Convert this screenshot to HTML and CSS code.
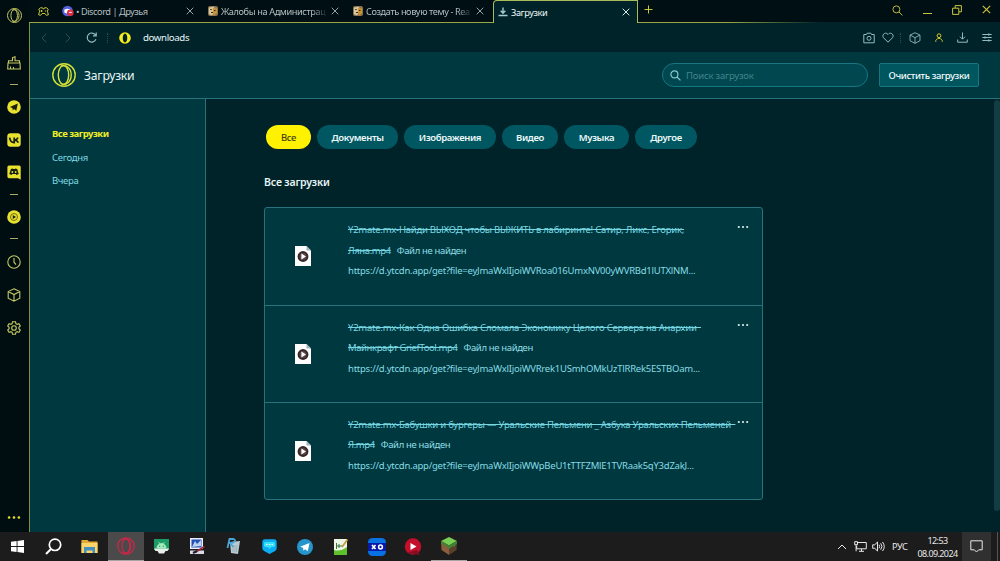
FILE: index.html
```html
<!DOCTYPE html>
<html lang="ru">
  <head>
    <meta charset="UTF-8" />
    <title>Загрузки</title>
    <link rel="stylesheet" href="styles.css">
  </head>
  <body>
    <!-- Shared icons -->
    <svg class="sprite">
      <symbol id="close" viewBox="0 0 8 8"><path d="M.7.7l6.6 6.6M7.3.7L.7 7.3" /></symbol>
      <symbol id="cube" viewBox="0 0 14 14"><path d="M7 .8l5.8 2.8v6.6L7 13.2l-5.8-3V3.6zM1.2 3.6L7 6.6l5.8-3M7 6.6v6.6" /></symbol>
      <symbol id="search" viewBox="0 0 12 12"><circle cx="4.8" cy="4.8" r="3.8" /><path d="M7.6 7.6l3.8 3.8" /></symbol>
      <symbol id="dots" viewBox="0 0 12 4"><circle cx="1.8" cy="2" r="1.1" /><circle cx="6" cy="2" r="1.1" /><circle cx="10.2" cy="2" r="1.1" /></symbol>
      <symbol id="opera" viewBox="0 0 24 24"><circle cx="12" cy="12" r="11.2" /><ellipse cx="11.500" cy="12" rx="5.200" ry="9.400" /><path d="M8.500 3.500c5-3 10.700 1.500 10.700 8.500s-5.700 11.500-10.700 8.500" /></symbol>
      <symbol id="forum" viewBox="0 0 10 10"><rect width="10" height="10" rx="2" fill="#8d7350" /><path d="M1 1.500l5-.8 1 5-3 3.500-3-1z" fill="#d8c8a0" /><path d="M5 2l4 .5v4.500L6 9.500 4.600 7z" fill="#c99432" /><path d="M2.200 3.500h1.500M6 4.500h1.500M3 6.500h2" stroke="#302b28" /></symbol>
      <symbol id="video" viewBox="0 0 16 20"><path d="M0 0h11.500L16 4.500V20H0z" fill="#fff" /><path d="M11.500 0v4.500H16z" fill="#9fb7bb" /><circle cx="8" cy="10.500" r="5.400" fill="#38272a" /><circle cx="8" cy="10.500" r="3.500" fill="#574643" /><path d="M6.400 7.500l4.600 3-4.600 3z" fill="#fff" /></symbol>
    </svg>

    <div class="browser">
      <!-- Left GX sidebar -->
      <div class="rail">
        <div class="rail-item rail-logo"><svg width="15" height="15"><use href="#opera" /></svg></div>
        <div class="rail-item"><svg width="14" height="14" viewBox="0 0 14 14"><path d="M1 7h12l.3 6H.7zM1.500 7V4.800h4V1.600L8 .8v4h4.500V7M3.500 13v-2.500M6.500 13v-2" /></svg></div>
        <div class="rail-line first"></div>
        <div class="rail-item"><svg class="solid" width="14" height="14" viewBox="0 0 14 14"><circle cx="7" cy="7" r="6.800" /><path class="cut" d="M2.800 6.900l8-3.300-1.500 7.200-2.300-1.700-1.200 1.300-.4-2.500z" /></svg></div>
        <div class="rail-item"><svg class="solid" width="14" height="14" viewBox="0 0 14 14"><rect x=".3" y=".3" width="13.400" height="13.400" rx="3" /><path class="cut-line" d="M2.600 4.600c.5 3.200 2 5 4.600 5V4.600M11 4.600c-.7 1.500-1.800 2.400-3.600 2.600 2 .1 3.200 1 4 2.400" /></svg></div>
        <div class="rail-item"><svg class="solid" width="14" height="15" viewBox="0 0 14 15"><path d="M2 .5h10.200q1.500 0 1.500 1.500v12.700l-2.700-1.500H2Q.4 13.200.4 11.600V2Q.4.5 2 .5z" /><path class="cut" d="M3.900 3.900l2-.5.4.7h1.500l.4-.7 2 .5 1.500 5-2.200 1.200-.8-1.200H5.300l-.8 1.200L2.300 9z" /><circle cx="5.300" cy="7" r=".9" /><circle cx="8.700" cy="7" r=".9" /></svg></div>
        <div class="rail-line"></div>
        <div class="rail-item music"><svg class="solid" width="14" height="14" viewBox="0 0 14 14"><circle cx="7" cy="7" r="6.800" /><circle cx="7" cy="7" r="3.500" fill="none" stroke="#655f0b" stroke-width=".9" /><path class="cut" d="M5.800 5l3.200 2-3.200 2z" /></svg></div>
        <div class="rail-line"></div>
        <div class="rail-item"><svg width="14" height="14" viewBox="0 0 14 14"><circle cx="7" cy="7" r="6.200" /><path d="M7 3v4.200l2 2.500" /></svg></div>
        <div class="rail-item"><svg width="14" height="14"><use href="#cube" /></svg></div>
        <div class="rail-item"><svg width="14" height="14" viewBox="0 0 14 14"><path d="M5.500.8h3l.4 1.900 1.200.6 1.800-.7 1.400 2.400-1.400 1.300v1.400l1.400 1.300-1.400 2.400-1.800-.7-1.200.6-.4 1.900h-3l-.4-1.900-1.200-.6-1.800.7L.7 9l1.400-1.300V6.300L.7 5l1.400-2.400 1.800.7 1.200-.6z" /><circle cx="7" cy="7" r="2.300" /></svg></div>
        <div class="rail-more"><svg class="solid" width="14" height="5"><use href="#dots" /></svg></div>
      </div>

      <div class="window">
        <!-- Tabs -->
        <div class="tabs">
          <div class="gx-corner"><svg width="11" height="9" viewBox="0 0 11 9"><path d="M2.500.8h2l.4 1h1.200l.4-1h2l1.700 1.400-.8 2 1 3.600-2 .5-1.500-1.800H4.100L2.600 8.300l-2-.5 1-3.600-.8-2zM3.500 3v2M2.600 4h2M6.800 4h1.400" /></svg></div>
          <div class="tab">
            <svg class="tab-icon discord" width="12" height="12" viewBox="0 0 13 12"><circle cx="6" cy="6" r="5.800" fill="#5660dc" /><path d="M2.700 4.500Q6 2.500 9 4.500l.5 3Q6 9.500 2.500 7.500z" fill="#fff" /><circle cx="9" cy="8" r="3.600" fill="#dc2f43" /><path d="M7.600 7.500h3" stroke="#fff" /></svg>
            <span class="tab-title discord-title">• Discord | Друзья</span>
            <svg class="tab-close" width="8" height="8"><use href="#close" /></svg>
          </div>
          <div class="tab">
            <svg class="tab-icon" width="10" height="10"><use href="#forum" /></svg>
            <span class="tab-title fade">Жалобы на Администрац</span>
            <svg class="tab-close" width="8" height="8"><use href="#close" /></svg>
          </div>
          <div class="tab">
            <svg class="tab-icon" width="10" height="10"><use href="#forum" /></svg>
            <span class="tab-title fade">Создать новую тему - Rea</span>
            <svg class="tab-close" width="8" height="8"><use href="#close" /></svg>
          </div>
          <div class="tab active">
            <svg class="tab-icon" width="10" height="10" viewBox="0 0 10 10"><path d="M5 .5v5.500M2.700 3.800L5 6.200l2.300-2.400M.5 8.500h9" stroke="#a5cbd0" stroke-width="1.400" fill="none" /></svg>
            <span class="tab-title">Загрузки</span>
            <svg class="tab-close" width="8" height="8"><use href="#close" /></svg>
          </div>
          <div class="tabs-rest">
            <svg width="9" height="9" viewBox="0 0 9 9"><path d="M4.500.5v8M.5 4.500h8" /></svg>
            <div class="window-buttons">
              <svg width="11" height="11"><use href="#search" /></svg>
              <svg width="9" height="10" viewBox="0 0 9 10"><path d="M0 8.500h9" /></svg>
              <svg width="10" height="10" viewBox="0 0 10 10"><path d="M.6 3.200h6.200v6.200H.6zM3.200 3V.6h6.200v6.200H7" /></svg>
              <svg width="9" height="9"><use href="#close" /></svg>
            </div>
          </div>
        </div>

        <!-- Address bar -->
        <div class="address">
          <svg class="dim" width="6" height="10" viewBox="0 0 6 10"><path d="M5.300.7L1 5l4.300 4.300" /></svg>
          <svg class="dim forward" width="6" height="10" viewBox="0 0 6 10"><path d="M.7.7L5 5 .7 9.300" /></svg>
          <svg class="reload" width="12" height="11" viewBox="0 0 12 11"><path d="M9.900 7.300A4.500 4.500 0 1 1 9.500 3M10.200.6v3.200H7" /></svg>
          <span class="sep"></span>
          <svg class="site" width="12" height="12" viewBox="0 0 12 12"><path fill-rule="evenodd" d="M6 .2a5.800 5.800 0 0 1 0 11.600A5.800 5.800 0 0 1 6 .2zM6 1.500c-3 0-3 9 0 9s3-9 0-9z" /></svg>
          <span class="url">downloads</span>
          <div class="address-tools">
            <svg width="12" height="12" viewBox="0 0 12 12"><path d="M.8 2.500h2.700l.6-1.300h3.800l.6 1.300h2.700v8.300H.8z" /><circle cx="6" cy="6.300" r="2" /></svg>
            <svg width="12" height="11" viewBox="0 0 12 11"><path d="M6 10.200L1.500 5.700C-.7 2.800 3.500-.8 6 2.500c2.500-3.300 6.700.3 4.500 3.200z" /></svg>
            <span class="sep"></span>
            <svg class="box" width="12" height="12"><use href="#cube" /></svg>
            <svg class="profile" width="8" height="9" viewBox="0 0 8 9"><circle cx="4" cy="2.700" r="1.900" /><path d="M.8 8.800V7.400l2-2M7.200 8.800V7.400l-2-2M2.800 5.400h2.400" /></svg>
            <svg width="11" height="11" viewBox="0 0 11 11"><path d="M5.500.5V7M3 4.700l2.500 2.500L8 4.700M.7 7.500v2.700h9.600V7.500" /></svg>
            <svg width="10" height="9" viewBox="0 0 10 9"><path d="M.3 1.500h9.400M.3 4.500h9.400M.3 7.500h9.400M6.800.3v2.400M3 3.300v2.400M6.800 6.300v2.400" /></svg>
          </div>
        </div>

        <!-- Page header -->
        <div class="header">
          <svg class="logo" width="24" height="24"><use href="#opera" /></svg>
          <h1>Загрузки</h1>
          <div class="search">
            <svg width="11" height="11"><use href="#search" /></svg>
            <span>Поиск загрузок</span>
          </div>
          <button class="clear">Очистить загрузки</button>
        </div>

        <div class="page">
          <div class="menu">
            <a class="current">Все загрузки</a>
            <a>Сегодня</a>
            <a>Вчера</a>
          </div>

          <div class="content">
            <div class="chips">
              <div class="chip selected">Все</div>
              <div class="chip docs">Документы</div>
              <div class="chip images">Изображения</div>
              <div class="chip videos">Видео</div>
              <div class="chip songs">Музыка</div>
              <div class="chip other">Другое</div>
            </div>
            <h2>Все загрузки</h2>
            <div class="list">
              <div class="download">
                <svg class="file" width="16" height="20"><use href="#video" /></svg>
                <div class="info">
                  <div><s>Y2mate.mx-Найди ВЫХОД чтобы ВЫЖИТЬ в лабиринте! Сатир, Ликс, Егорик,</s></div>
                  <div><s class="tail">Ляна.mp4</s><span class="missing">Файл не найден</span></div>
                  <div class="link">https://d.ytcdn.app/get?file=eyJmaWxlIjoiWVRoa016UmxNV00yWVRBd1lUTXlNM...</div>
                </div>
                <svg class="more" width="12" height="4"><use href="#dots" /></svg>
              </div>
              <div class="download">
                <svg class="file" width="16" height="20"><use href="#video" /></svg>
                <div class="info">
                  <div><s>Y2mate.mx-Как Одна Ошибка Сломала Экономику Целого Сервера на Анархии&nbsp;&nbsp;</s></div>
                  <div><s class="tail">Майнкрафт GriefTool.mp4</s><span class="missing">Файл не найден</span></div>
                  <div class="link">https://d.ytcdn.app/get?file=eyJmaWxlIjoiWVRrek1USmhOMkUzTlRRek5ESTBOam...</div>
                </div>
                <svg class="more" width="12" height="4"><use href="#dots" /></svg>
              </div>
              <div class="download">
                <svg class="file" width="16" height="20"><use href="#video" /></svg>
                <div class="info">
                  <div><s>Y2mate.mx-Бабушки и бургеры — Уральские Пельмени _ Азбука Уральских Пельменей&nbsp;&nbsp;</s></div>
                  <div><s class="tail">Я.mp4</s><span class="missing">Файл не найден</span></div>
                  <div class="link">https://d.ytcdn.app/get?file=eyJmaWxlIjoiWWpBeU1tTTFZMlE1TVRaak5qY3dZakJ...</div>
                </div>
                <svg class="more" width="12" height="4"><use href="#dots" /></svg>
              </div>
            </div>
          </div>
          <div class="scrollbar"></div>
        </div>
      </div>
    </div>

    <!-- Windows taskbar -->
    <div class="taskbar">
      <div class="task"><svg width="13" height="13" viewBox="0 0 13 13"><path d="M0 1.800L5.600 1v5H0zM6.500.9L13 0v6H6.500zM0 7h5.600v5L0 11.200zM6.500 7H13v6l-6.500-.9z" fill="#fff" /></svg></div>
      <div class="task"><svg width="17" height="17" viewBox="0 0 17 17"><circle cx="10" cy="6.800" r="5.700" fill="none" stroke="#fff" stroke-width="1.700" /><path d="M6 11L1 16" stroke="#fff" stroke-width="2" /></svg></div>
      <div class="task"><svg width="17" height="15" viewBox="0 0 17 15"><path d="M.5 1h6l1.500 1.500h8.500V14H.5z" fill="#e5a936" /><path d="M.5 4h16v10H.5z" fill="#fbd56b" /><path d="M3 8h11v6h-2.500v-2.500h-6V14H3z" fill="#438fc0" /></svg></div>
      <div class="task open"><svg width="18" height="18" viewBox="0 0 18 18"><g fill="none" stroke="#cf2648" stroke-width="1.200"><circle cx="9" cy="9" r="8.200" /><ellipse cx="9" cy="9" rx="4" ry="7" /><path d="M6.500 2.500c3.500-2 7.300 1.500 7.300 6.500s-3.800 8.500-7.300 6.500" /></g></svg></div>
      <div class="task"><svg width="15" height="15" viewBox="0 0 15 15"><path d="M0 0h15v11H0z" fill="#1b9b67" /><path d="M3 9a4.500 4.500 0 0 1 9 0zM4.500 3l1.500 2M10.500 3L9 5" fill="#a7edbd" stroke="#a7edbd" stroke-width=".8" /><path d="M0 9.500h15L13.500 12h-2L10 14.500H5L3.500 12h-2z" fill="#e8eee9" /><circle cx="5.700" cy="7.200" r=".6" fill="#15754f" /><circle cx="9.300" cy="7.200" r=".6" fill="#15754f" /></svg></div>
      <div class="task"><svg width="15" height="17" viewBox="0 0 15 17"><path d="M0 0h13v11H0z" fill="#ececf4" /><path d="M1.500 1.500h10v8h-10z" fill="#2450b8" /><path d="M2 9l3-6 2 3 4-4v6z" fill="#b8d2f2" /><path d="M0 12.500h14V16H0z" fill="#dadbe8" /><path d="M5 14.500l9.500-6" stroke="#a52431" stroke-width="1.500" /><path d="M3 15l4-2" stroke="#21202c" stroke-width="2" /></svg></div>
      <div class="task"><svg width="15" height="17" viewBox="0 0 15 17"><path d="M4 4l10-1-2 13-7-1z" fill="#b9cbd2" /><path d="M7 7v7M9 7v7M11 7l-.5 7" stroke="#8fa5ae" stroke-width=".7" /><path d="M1.500 10L3.500 1h4c3 1 1.500 4-3.500 4l3.500 4" fill="none" stroke="#4aa5d6" stroke-width="1.800" /></svg></div>
      <div class="task"><svg width="15" height="15" viewBox="0 0 15 15"><path d="M3 .3h9q2.700 0 2.700 3v6q0 2-2 3L7.500 15l-5-2.700Q.3 11.300.3 9.300v-6Q.3.300 3 .3z" fill="#0bacf4" /><path d="M3.500 3h8q1.500 0 1.500 1.500v2Q13 8 11 8H9L7.500 10 6 8H4Q2 8 2 6.500v-2Q2 3 3.500 3z" fill="#37e2f7" /><path d="M4 5.500h1.500M6.800 5.500h1.500M9.600 5.500h1.500" stroke="#eaffff" stroke-width="1.200" /></svg></div>
      <div class="task"><svg width="16" height="16" viewBox="0 0 16 16"><circle cx="8" cy="8" r="8" fill="#2595cc" /><path d="M3 7.800l9.500-3.900-1.700 8.300L8 10.200l-1.500 1.500-.5-2.900z" fill="#fff" /></svg></div>
      <div class="task"><svg width="16" height="18" viewBox="0 0 16 18"><path d="M1 1h13v16H1z" fill="#edf5e5" /><path d="M1 12q6 2 13-3v8H1z" fill="#5ec12b" /><path d="M3.500 5v6M3.500 8h6M6 6v4" stroke="#3c7041" /><path d="M9 9l5.500-7.500" stroke="#c39a45" stroke-width="1.800" /></svg></div>
      <div class="task"><svg width="18" height="18" viewBox="0 0 18 18"><rect width="18" height="18" rx="4.500" fill="#0872e2" /><path d="M0 5h18v8H0z" fill="#0619a8" /><path d="M4 7l3.500 4M7.500 7L4 11" stroke="#fff" stroke-width="1.700" /><circle cx="12.500" cy="9" r="1.900" fill="none" stroke="#fff" stroke-width="1.500" /></svg></div>
      <div class="task"><svg width="18" height="18" viewBox="0 0 18 18"><circle cx="9" cy="8.500" r="8.200" fill="#c4102c" /><path d="M3 15l10-3 3 5-5-1z" fill="#850d20" /><path d="M6.500 5l6 3.500-6 3.500z" fill="#fff" /></svg></div>
      <div class="task running"><svg width="16" height="18" viewBox="0 0 16 18"><path d="M8 0l8 4-8 4.500L0 4z" fill="#79ce56" /><path d="M0 4l8 4.500V18l-7.500-5z" fill="#8b5d3d" /><path d="M16 4L8 8.500V18l7.500-5z" fill="#59402b" /><path d="M0 4l8 4.500L16 4v3l-2 1v2l-2-1-4 3-2-3-2 1V8L0 7z" fill="#3f8436" /></svg></div>
      <div class="tray">
        <svg width="10" height="6" viewBox="0 0 10 6"><path d="M1 5l4-4 4 4" /></svg>
        <svg class="network" width="13" height="11" viewBox="0 0 13 11"><path d="M3.500 1.500h8.800v6.300H2.700V5M5 10.300h5M7.500 8v2.300M.7.700h2.800v3H.7zM2.100 3.700v6.600" /></svg>
        <svg class="volume" width="13" height="11" viewBox="0 0 13 11"><path d="M.7 3.800h2L5.500 1v9L2.700 7.300h-2zM7 3.700q1.300 1.800 0 3.600M8.700 2.300q2.500 3.200 0 6.400M10.500 1q3.500 4.500 0 9" /></svg>
        <span class="lang">РУС</span>
        <div class="clock"><div>12:53</div><div>08.09.2024</div></div>
        <div class="notify"><svg width="13" height="13" viewBox="0 0 13 13"><path d="M.8.8h11.400v9H8.700L6.500 12 4.300 9.800H.8z" /></svg></div>
        <span class="peek"></span>
      </div>
    </div>
  </body>
</html>
```

FILE: styles.css
```css
* {
  box-sizing: border-box;
}

body {
  margin: 0;
  width: 1000px;
  height: 561px;
  overflow: hidden;
  background: #00232a;
  color: #e6f5f5;
  font-family: "Noto Sans", "Open Sans", sans-serif;
  font-size: 9.5px;
  white-space: nowrap;
}

svg {
  display: block;
  flex: none;
}

.sprite {
  display: none;
}

.browser {
  display: flex;
  height: 532px;
}

/* Left rail */
.rail {
  display: flex;
  flex-direction: column;
  width: 29px;
  padding-right: 1px;
  background: #000d11;
}

.rail-item {
  display: flex;
  align-items: center;
  justify-content: center;
  height: 33px;
}

.rail-logo {
  height: 30px;
  margin-bottom: 16px;
}

.rail-item.music {
  height: 32px;
}

.rail svg {
  fill: none;
  stroke: #c5c962;
  stroke-width: 1.1;
}

.rail .rail-logo svg {
  stroke-width: 1.6;
}

.rail svg.solid {
  fill: #e8e12f;
  stroke: none;
}

.rail .cut {
  fill: #17200c;
}

.rail .cut-line {
  fill: none;
  stroke: #17200c;
  stroke-width: 1.7;
}

.rail-line {
  height: 12px;
  padding: 5px 10px;
}

.rail-line.first {
  height: 11px;
}

.rail-line::before {
  content: "";
  display: block;
  height: 1px;
  background: #a6ab68;
}

.rail-more {
  display: flex;
  justify-content: center;
  margin-top: auto;
  padding-bottom: 12px;
}

.window {
  flex: 1;
  display: flex;
  flex-direction: column;
  min-width: 0;
}

/* Tabs */
.tabs {
  display: flex;
  height: 23px;
  background: #000f13;
}

.gx-corner {
  width: 29px;
  padding: 7px 0 0 9px;
  border-bottom: 1px solid #9aa947;
}

.gx-corner svg,
.tabs-rest svg {
  fill: none;
  stroke: #cbc640;
}

.tab {
  display: flex;
  align-items: center;
  width: 145px;
  padding: 0 9px 0 5px;
  border-bottom: 1px solid #9aa947;
  color: #b4bfc0;
  font-size: 9.2px;
}

.tab-icon {
  margin-right: 3px;
}

.tab-icon.discord {
  margin: 0 2px 0 -1px;
}

.tab-title {
  flex: 1;
  overflow: hidden;
  letter-spacing: -0.4px;
}

.tab-title.discord-title {
  letter-spacing: -0.45px;
}

.tab-title.fade {
  margin-right: 3px;
  -webkit-mask-image: linear-gradient(90deg, #000 85%, transparent);
  mask-image: linear-gradient(90deg, #000 85%, transparent);
}

.tab-close {
  stroke: #8fa5a8;
  fill: none;
}

.tab.active {
  border: 1px solid #a8bc5c;
  border-bottom: 0;
  border-radius: 4px 0 0 0;
  padding: 0 7px 0 4px;
  background: #00232a;
  color: #edf7f6;
}

.tab.active .tab-close {
  stroke: #d9ecec;
}

.tabs-rest {
  flex: 1;
  display: flex;
  justify-content: space-between;
  padding: 5px 9px 0 6px;
  border-bottom: 1px solid;
  border-image: linear-gradient(90deg, #9aa947 25%, #00232a 50%) 1;
}

.window-buttons {
  display: flex;
  gap: 20px;
}

/* Address bar */
.address {
  display: flex;
  align-items: center;
  height: 29px;
  padding: 0 8px 0 11px;
  border-left: 1px solid #85913a;
  background: #00232a;
}

.address svg {
  fill: none;
  stroke: #91bdc1;
}

.address svg.dim {
  stroke: #26515b;
}

.address .forward {
  margin-left: 18px;
}

.address .reload {
  margin: 0 9px 0 15px;
  stroke-width: 1.2;
}

.sep {
  height: 10px;
  border-left: 1px dotted #26515b;
}

.address svg.site {
  margin: 0 12px 0 11px;
  fill: #f5ed1c;
  stroke: none;
}

.url {
  font-size: 9.7px;
  letter-spacing: -0.38px;
}

.address-tools {
  display: flex;
  align-items: center;
  margin-left: auto;
}

.address-tools > :nth-child(2) {
  margin: 0 6px 0 7px;
}

.address-tools .box {
  margin: 0 14px 0 8px;
}

.address svg.profile {
  margin-right: 14px;
  stroke: #d4ca2e;
}

.address-tools > :last-child {
  margin: 0 0 0 14px;
}

/* Page header */
.header {
  display: flex;
  align-items: center;
  height: 47px;
  padding: 0 21px 0 22px;
  border-left: 1px solid #85913a;
  border-bottom: 1px solid #28727b;
  background: #003840;
}

.logo {
  fill: none;
  stroke: #d6e335;
  stroke-width: 1.4;
}

h1 {
  margin: 0 auto 0 8px;
  font-size: 12.2px;
  font-weight: 400;
  letter-spacing: -0.25px;
}

.search {
  display: flex;
  align-items: center;
  width: 206px;
  height: 24px;
  padding-left: 7px;
  border: 1px solid #177681;
  border-radius: 12px;
  background: #00474f;
  color: #40858c;
  letter-spacing: -0.2px;
}

.search svg {
  margin-right: 5px;
  fill: none;
  stroke: #87c8cd;
  stroke-width: 1.3;
}

.clear {
  width: 100px;
  height: 24px;
  margin-left: 11px;
  padding: 0;
  border: 1px solid #187681;
  border-radius: 2px;
  background: #00565f;
  color: #eefafa;
  font: 500 9.5px "Noto Sans", sans-serif;
  letter-spacing: -0.4px;
}

/* Page body */
.page {
  display: flex;
  flex: 1;
  background: #00232a;
}

.menu {
  display: flex;
  flex-direction: column;
  width: 177px;
  padding: 23px 0 0 22px;
  border-left: 1px solid #85913a;
  border-right: 1px solid #28727b;
  background: #003840;
  color: #7fd8e4;
  line-height: 23.5px;
  letter-spacing: -0.3px;
}

.menu .current {
  color: #f0ee27;
  font-weight: 700;
  letter-spacing: -0.5px;
}

.content {
  flex: 1;
  padding: 26px 0 0 58px;
}

.chips {
  display: flex;
  gap: 6px;
  padding-left: 2px;
}

.chip {
  height: 24px;
  border-radius: 12px;
  background: #005761;
  color: #edf9f9;
  font-weight: 600;
  line-height: 25px;
  text-align: center;
  letter-spacing: -0.35px;
}

.chip.selected {
  width: 45px;
  background: #fff200;
  color: #403f0b;
  font-weight: 500;
}

.chip.docs {
  width: 81px;
}

.chip.images {
  width: 92px;
}

.chip.videos {
  width: 56px;
}

.chip.songs {
  width: 65px;
}

.chip.other {
  width: 62px;
}

h2 {
  margin: 25px 0 16px;
  font-size: 10.5px;
  font-weight: 600;
  line-height: 17px;
  letter-spacing: -0.15px;
}

.list {
  width: 499px;
  border: 1px solid #28727b;
  border-radius: 3px;
  background: #003840;
}

.download {
  display: flex;
  height: 96.5px;
  padding: 12px 14px 0 30px;
  color: #76d7e0;
}

.download + .download {
  height: 97.3px;
  border-top: 1px solid #28727b;
}

.file {
  margin: 26px 37px 0 0;
}

.info {
  flex: 1;
  min-width: 0;
  line-height: 20.5px;
  letter-spacing: -0.24px;
}

.tail {
  letter-spacing: -0.4px;
}

.missing {
  margin-left: 6px;
  color: #8fdfe5;
  letter-spacing: -0.35px;
}

.link {
  color: #86dce3;
}

.more {
  margin: 5px -1px 0 1px;
  fill: #dceff0;
}

.scrollbar {
  width: 6px;
  height: 411px;
  margin-top: 1px;
  border-radius: 3px;
  background: #123d44;
}

/* Taskbar */
.taskbar {
  display: flex;
  height: 29px;
  background: #1c1c1c;
}

.task {
  display: flex;
  align-items: center;
  justify-content: center;
  width: 35.9px;
}

.task.open {
  border-bottom: 1px solid #a5a5a5;
  background: #4a4a4a;
}

.task.running {
  border-bottom: 1px solid #a5a5a5;
}

.tray {
  display: flex;
  align-items: center;
  margin-left: auto;
  padding-right: 2px;
  color: #e9e9e9;
}

.tray svg {
  fill: none;
  stroke: #e9e9e9;
}

.network {
  margin: 0 5px 0 7px;
}

.lang {
  width: 17px;
  margin-left: 7px;
  font-size: 9.2px;
  letter-spacing: -0.3px;
}

.clock {
  width: 50px;
  padding-left: 1px;
  margin-left: 3px;
  font-size: 9px;
  line-height: 13px;
  text-align: center;
  letter-spacing: -0.6px;
}

.notify {
  display: flex;
  align-items: center;
  justify-content: center;
  width: 29px;
  height: 29px;
  background: #303030;
}

.peek {
  height: 29px;
  margin-left: 6px;
  border-left: 1px solid #555;
}
```
